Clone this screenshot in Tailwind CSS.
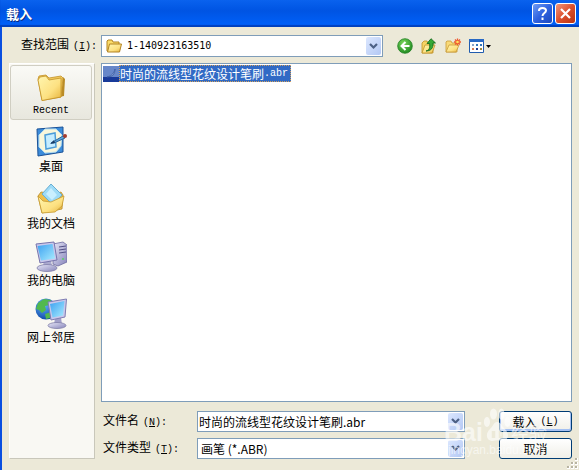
<!DOCTYPE html>
<html lang="zh-CN">
<head>
<meta charset="utf-8">
<meta name="viewport" content="width=device-width, initial-scale=1">
<title>载入</title>
<script src="https://cdn.jsdelivr.net/npm/@tailwindcss/browser@4"></script>
</head>
<body class="bg-[#ece9d8] font-['Noto_Sans_CJK_SC',sans-serif] text-[12px] leading-4 text-black">
<svg class="absolute size-0" aria-hidden="true">
  <defs>
    <linearGradient id="gold" x1="0" y1="0" x2="1" y2="1"><stop offset="0" stop-color="#fff6b0"/><stop offset=".6" stop-color="#fde182"/><stop offset="1" stop-color="#e6b33b"/></linearGradient>
    <linearGradient id="screen" x1="0" y1="0" x2="1" y2="1"><stop offset="0" stop-color="#3ba0f0"/><stop offset="1" stop-color="#a9ecff"/></linearGradient>
    <linearGradient id="metal" x1="0" y1="0" x2="1" y2="1"><stop offset="0" stop-color="#e8e8f8"/><stop offset="1" stop-color="#8684ba"/></linearGradient>
    <radialGradient id="green" cx=".4" cy=".3" r=".8"><stop offset="0" stop-color="#79d65b"/><stop offset="1" stop-color="#16821a"/></radialGradient>
    <radialGradient id="sea" cx=".4" cy=".3" r=".8"><stop offset="0" stop-color="#63b4ff"/><stop offset="1" stop-color="#063c9c"/></radialGradient>
  </defs>
</svg>
<div class="relative flex min-h-screen flex-col border-l-2 border-[#0a4fe0]">
  <header class="-ml-[2px] flex h-[27px] items-center justify-between bg-linear-to-b from-[#0a62ee] via-[#0054e3] via-40% to-[#0062fb] pr-[3px] pl-[6px] shadow-[inset_0_-2px_1px_#0040bd]">
    <h1 class="text-[13px] font-bold text-white [text-shadow:1px_1px_0_#0a2a80]">载入</h1>
    <div class="flex gap-[2px]">
      <button aria-label="帮助" class="flex size-[21px] items-center justify-center rounded-[3px] border border-white bg-linear-to-br from-[#6f9bf4] via-[#2f62e0] to-[#1c48bd]">
        <svg class="size-[15px]" viewBox="0 0 15 15" fill="none" stroke="#fff" stroke-width="2"><path d="M4 5V4.500C4 1 11 1 11 4.500C11 7 7.500 7 7.500 10M7.500 11.500V14"/></svg>
      </button>
      <button aria-label="关闭" class="flex size-[21px] items-center justify-center rounded-[3px] border border-white bg-linear-to-br from-[#f0957a] via-[#dc4f2c] to-[#b83210]">
        <svg class="size-[13px]" viewBox="0 0 13 13" stroke="#fff" stroke-width="2.200"><path d="M2 2L11 11M11 2L2 11"/></svg>
      </button>
    </div>
  </header>

  <main class="flex flex-1 flex-col gap-[6px] pt-2 pr-[7px] pb-[11px] pl-[7px]">
    <div class="flex h-[22px] items-center">
      <label for="folder" class="w-[92px] shrink-0 pb-[2px] pl-3 whitespace-nowrap">查找范围<span class="pl-1 font-['Liberation_Mono',monospace] text-[10px]">(<u>I</u>):</span></label>
      <div class="relative h-full min-w-0 flex-1">
        <select id="folder" class="h-full w-full appearance-none border border-[#7f9db9] bg-white pr-5 pl-[25px] font-['DejaVu_Sans_Mono',monospace] text-[10px] leading-4"><option>1-140923163510</option></select>
        <svg class="pointer-events-none absolute top-[3px] left-[5px] size-4" viewBox="0 0 16 16" stroke="#b38323"><path d="M1 13V3L2 2H6L7 4H13V13Z" fill="#fbdc69"/><path d="M1.500 14L3.500 6H15.500L13.500 14Z" fill="url(#gold)"/></svg>
        <span class="pointer-events-none absolute inset-y-[2px] right-[2px] flex w-[15px] items-center justify-center rounded-[2px] bg-linear-to-br from-[#dce7fe] to-[#b3c8f4]"><svg class="h-[7px] w-[9px]" viewBox="0 0 9 7" fill="none" stroke="#4d6185" stroke-width="2.200"><path d="M1 1L4.500 4.500L8 1"/></svg></span>
      </div>
      <div class="flex w-[189px] shrink-0 items-center gap-2 pl-[14px]">
        <button aria-label="后退"><svg class="size-4" viewBox="0 0 16 16"><circle cx="8" cy="8" r="7.300" fill="url(#green)" stroke="#238125" stroke-width=".8"/><path d="M8.500 4L4.500 8L8.500 12M5 8H12.500" fill="none" stroke="#fff" stroke-width="2"/></svg></button>
        <button aria-label="向上一级"><svg class="size-4" viewBox="0 0 16 16"><path d="M1 15V5L3 3H6L7 5H12V15Z" fill="#f7d465" stroke="#c09328" stroke-width=".8"/><path d="M1 15L4 7H14L11 15Z" fill="url(#gold)" stroke="#c09328" stroke-width=".8"/><path d="M5 13C9 12 9 9 8.500 5.500H6L10 .7L14.500 5H12C12.500 10 10 13 5 13Z" fill="#35a936" stroke="#0b6515" stroke-width=".8"/></svg></button>
        <button aria-label="新建文件夹"><svg class="size-4" viewBox="0 0 16 16"><path d="M1 14V4L2 3H6L7 5H12V14Z" fill="#f9da77" stroke="#c89a39" stroke-width=".8"/><path d="M1 14L4 7H14L11 14Z" fill="url(#gold)" stroke="#c89a39" stroke-width=".8"/><path d="M12.500 .5V7.500M9 4H16M10 1.500L15 6.500M15 1.500L10 6.500" stroke="#ef582d" stroke-width="1.300"/><circle cx="12.500" cy="4" r="1.300" fill="#ffe15b"/></svg></button>
        <button aria-label="查看" class="flex items-center gap-[2px]"><svg class="h-[14px] w-[15px]" viewBox="0 0 15 14"><path d="M.5 .5H14.500V13.500H.5Z" fill="#fff" stroke="#215cae"/><path d="M0 0H15V3H0Z" fill="#2869c4"/><path d="M3 5H5V7H3Z" fill="#8aa4c8"/><path d="M7 5H9V7H7ZM11 5H13V7H11Z" fill="#3577b7"/><path d="M3 9H5V11H3Z" fill="#d57b51"/><path d="M7 9H9V11H7Z" fill="#223d91"/><path d="M11 9H13V11H11Z" fill="#a1893a"/></svg><svg class="h-[3px] w-[5px]" viewBox="0 0 5 3"><path d="M0 0H5L2.500 3Z"/></svg></button>
      </div>
    </div>

    <div class="flex flex-1 gap-[6px]">
      <nav class="flex w-[86px] shrink-0 flex-col gap-[2px] border border-[#fff] border-r-[#c9c7ba] border-b-[#c9c7ba] bg-[#f9f8f3] pt-px pr-[2px]">
        <button class="flex h-[55px] flex-col items-center rounded-[3px] border border-[#d0cec2] bg-linear-to-b from-[#fafaf6] to-[#e8e7de] pt-[5px]">
          <svg class="size-8 shrink-0" viewBox="0 0 32 32" stroke="#c39227" stroke-width=".8" stroke-linejoin="round"><path d="M9 29L29 25L30 8L28 6L26 26Z" fill="#b98b25" stroke="none"/><path d="M3 8L4 5L11 4L14 7L26 5L28 7L26 26L7 29.500Z" fill="#f2ca5c"/><path d="M3 9L5 6L11 5L14 9L26 7L26 26L7 29.500Z" fill="url(#gold)"/></svg>
          <span class="font-['Liberation_Mono',monospace] text-[10px] leading-4">Recent</span>
        </button>
        <button class="flex h-[55px] flex-col items-center pt-[4px]">
          <svg class="size-8 shrink-0" viewBox="0 0 32 32"><path d="M2 3L28 1L28 26L3 30Z" fill="#3c8cda" stroke="#1b5297"/><path d="M4 9L10 3H21L27 9L26 20L21 26L10 27L4 21Z" fill="#f8f7dc" stroke="#b8ddec"/><path d="M10 9L20 7L21 21L11 23Z" fill="#c5edff" stroke="#4b9dd9" stroke-width="1.500"/><path d="M16 17L28 10L30 12L19 17Z" fill="#60a8d9" stroke="#26659e"/><circle cx="30" cy="10" r="2" fill="#a63d2d"/><path d="M15 18L19 14L20 17Z" fill="#173d66"/></svg>
          <span>桌面</span>
        </button>
        <button class="flex h-[55px] flex-col items-center pt-[4px]">
          <svg class="size-8 shrink-0" viewBox="0 0 32 32" stroke-linejoin="round"><path d="M3 13L6 9L14 10L16 12L26 9L28 12L27 26L7 30Z" fill="#eebf4c" stroke="#b88c29" stroke-width=".8"/><path d="M7 11L16 1L27 12L18 22Z" fill="#9edbf7" stroke="#67aed2"/><path d="M11 11L16 5L22 12L17 17Z" fill="#c9efff"/><path d="M3 13L8 18L16 19L29 13L27 23L20 29L7 30Z" fill="url(#gold)" stroke="#c69a30" stroke-width=".8"/></svg>
          <span>我的文档</span>
        </button>
        <button class="flex h-[55px] flex-col items-center pt-[4px]">
          <svg class="size-8 shrink-0" viewBox="0 0 32 32"><path d="M18 4L28 2L32 5V22L23 26L18 24Z" fill="url(#metal)" stroke="#6c6aa0" stroke-width=".8"/><path d="M24 7L31 6M24 10L31 9M24 13L31 12" stroke="#545287"/><circle cx="28" cy="19" r="1" fill="#55d35f"/><path d="M9 20L16 20L17 26L8 26Z" fill="#aaa9ce"/><ellipse cx="12" cy="28" rx="10" ry="3.500" fill="url(#metal)" stroke="#7f7da8" stroke-width=".8"/><path d="M1 4L19 2L22 20L5 23Z" fill="#c9c8ec" stroke="#7775ac"/><path d="M2.500 6L17.500 4L20 18.500L6 20.500Z" fill="url(#screen)"/></svg>
          <span>我的电脑</span>
        </button>
        <button class="flex h-[55px] flex-col items-center pt-[4px]">
          <svg class="size-8 shrink-0" viewBox="0 0 32 32"><circle cx="11" cy="12" r="10.500" fill="url(#sea)"/><path d="M3 6L9 2L16 3L15 8L10 9L11 13L7 16L4 13L1 12ZM10 17L16 15L15 21L11 22Z" fill="#52b94d"/><path d="M20 21L26 20L27 28H19Z" fill="#a2a0c9"/><ellipse cx="22" cy="28.500" rx="9" ry="3" fill="url(#metal)" stroke="#7f7da8" stroke-width=".8"/><path d="M13 5L31.500 2L30 20L16 23Z" fill="#c9c8ec" stroke="#7f7db2"/><path d="M15 7L29.500 4L28 18.500L17.500 20.500Z" fill="url(#screen)"/></svg>
          <span>网上邻居</span>
        </button>
      </nav>

      <div class="flex min-w-0 flex-1 flex-col gap-[9px]">
        <ul class="flex-1 border border-[#7f9db9] bg-white p-px" role="listbox" aria-label="文件列表">
          <li class="flex h-[17px] items-center" role="option" aria-selected="true">
            <svg class="h-4 w-4 shrink-0" viewBox="0 0 16 16"><path d="M0 0H16V16H0Z" fill="#6787c9"/><path d="M0 11H16V16H0Z" fill="#183a99"/><path d="M4 11C9 10 11 7 12 3C12 8 10 11 4 11Z" fill="#9db9e4" stroke="#3959a0" stroke-width=".8"/></svg>
            <span class="flex h-full items-center border border-dotted border-[#d3a15d] bg-[#316ac5] pr-[2px] text-white">时尚的流线型花纹设计笔刷<span class="font-['Liberation_Mono',monospace] text-[10px]">.abr</span></span>
          </li>
        </ul>
        <form class="grid grid-cols-[96px_1fr_73px] items-center gap-y-[6px]" onsubmit="return false">
          <label for="filename" class="pl-[2px]">文件名<span class="pl-1 font-['Liberation_Mono',monospace] text-[10px]">(<u>N</u>):</span></label>
          <div class="relative mr-[34px] h-[21px]">
            <input id="filename" type="text" value="时尚的流线型花纹设计笔刷.abr" class="h-full w-full border border-[#7f9db9] bg-white pr-4 pl-px">
            <button type="button" aria-label="历史文件名" class="absolute inset-y-[2px] right-[2px] flex w-[15px] items-center justify-center rounded-[2px] bg-linear-to-br from-[#dce7fe] to-[#b3c8f4]"><svg class="h-[7px] w-[9px]" viewBox="0 0 9 7" fill="none" stroke="#4d6185" stroke-width="2.200"><path d="M1 1L4.500 4.500L8 1"/></svg></button>
          </div>
          <button type="submit" class="flex h-[21px] items-center justify-center rounded-[3px] border border-[#003c74] bg-linear-to-b from-white to-[#f0efe8] shadow-[inset_0_-1px_0_1px_#a4c0f2]">载入<span class="pl-1 font-['Liberation_Mono',monospace] text-[10px]">(<u>L</u>)</span></button>
          <label for="filetype" class="pl-[2px]">文件类型<span class="pl-1 font-['Liberation_Mono',monospace] text-[10px]">(<u>T</u>):</span></label>
          <div class="relative mr-[34px] h-[21px]">
            <select id="filetype" class="h-full w-full appearance-none border border-[#7f9db9] bg-white pr-4 pl-[3px]"><option>画笔 (*.ABR)</option></select>
            <span class="pointer-events-none absolute inset-y-[2px] right-[2px] flex w-[15px] items-center justify-center rounded-[2px] bg-linear-to-br from-[#dce7fe] to-[#b3c8f4]"><svg class="h-[7px] w-[9px]" viewBox="0 0 9 7" fill="none" stroke="#4d6185" stroke-width="2.200"><path d="M1 1L4.500 4.500L8 1"/></svg></span>
          </div>
          <button type="button" class="flex h-[21px] items-center justify-center rounded-[3px] border border-[#003c74] bg-linear-to-b from-white to-[#f0efe8]">取消</button>
        </form>
      </div>
    </div>
  </main>

  <div class="pointer-events-none absolute right-[30px] bottom-[12px] w-[105px] text-white/60" aria-hidden="true">
    <div class="flex h-[34px] items-end font-['Liberation_Sans',sans-serif] text-[25px] leading-5 font-bold">
      <span>Bai</span>
      <svg class="h-[34px] w-[28px] shrink-0" viewBox="0 0 32 34" preserveAspectRatio="none" fill="currentColor"><ellipse cx="4.500" cy="14" rx="3.500" ry="5"/><ellipse cx="12" cy="6" rx="4" ry="5.500"/><ellipse cx="21" cy="6" rx="3.500" ry="5.500"/><ellipse cx="28" cy="14" rx="3.500" ry="5"/><path fill-rule="evenodd" d="M16 14C12 14 12 18 8 21C2 26 4 33 11 33C15 32 18 32 22 33C29 33 31 26 25 21C21 18 21 14 16 14ZM10 23H14V30H10ZM18 23V30H23V23H21V28H20V23Z"/></svg>
      <span class="whitespace-nowrap font-['Noto_Sans_CJK_SC',sans-serif] text-[18px] font-normal">经验</span>
    </div>
    <p class="pl-1 font-['Liberation_Sans',sans-serif] text-[12px] leading-4">jingyan.baidu.com</p>
  </div>
  <svg class="absolute right-px bottom-px size-[12px]" viewBox="0 0 12 12" aria-hidden="true"><path d="M9 1H12V4H9ZM5 5H8V8H5ZM9 5H12V8H9ZM1 9H4V12H1ZM5 9H8V12H5ZM9 9H12V12H9Z" fill="#fff"/><path d="M9 1H11V3H9ZM5 5H7V7H5ZM9 5H11V7H9ZM1 9H3V11H1ZM5 9H7V11H5ZM9 9H11V11H9Z" fill="#b8b4a2"/></svg>
</div>
</body>
</html>
